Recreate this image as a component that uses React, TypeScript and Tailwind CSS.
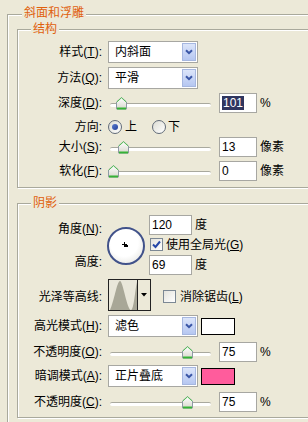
import React from "react";

function Mn({ text, k }: { text: string; k?: string }) {
  return (
    <>
      {text}
      {k && (
        <>
          (<span className="underline underline-offset-[1px]">{k}</span>)
        </>
      )}
      :
    </>
  );
}

function Label({ children }: { children: React.ReactNode }) {
  return <div className="w-[84px] shrink-0 text-right leading-[14px]">{children}</div>;
}

function Select({ value }: { value: string }) {
  return (
    <div className="ml-[6px] flex h-[22px] w-[90px] shrink-0 border border-[#A7A7A2] bg-white">
      <span className="flex-1 pl-[6px] leading-[20px]">{value}</span>
      <span className="m-[1px] flex w-[14px] items-center justify-center border border-[#A6B7E0] bg-gradient-to-b from-[#DCE5FA] to-[#B6C7F1]">
        <svg width="8" height="6" viewBox="0 0 8 6">
          <path d="M1 1.2 L4 4.2 L7 1.2" stroke="#3A56A6" strokeWidth="2" fill="none" />
        </svg>
      </span>
    </div>
  );
}

function Field({ value, w = 38, sel }: { value: string; w?: number; sel?: boolean }) {
  return (
    <div
      className={`flex h-[20px] shrink-0 items-center border border-[#A7A7A2] bg-white pl-[2px] ${
        w === 38 ? "w-[38px]" : "w-[43px]"
      }`}
    >
      <span className={sel ? "bg-[#2F365F] px-[1px] leading-[14px] text-white" : "leading-[14px]"}>{value}</span>
    </div>
  );
}

function Thumb() {
  return (
    <svg width="11" height="13" viewBox="0 0 11 13">
      <defs>
        <linearGradient id="tg" x1="0" y1="0" x2="0" y2="1">
          <stop offset="0" stopColor="#ffffff" />
          <stop offset="1" stopColor="#D8D8CE" />
        </linearGradient>
      </defs>
      <path d="M5.5 0.5 L10.5 5 L10.5 12 L0.5 12 L0.5 5 Z" fill="url(#tg)" stroke="#8E9AA4" />
      <path d="M0.8 5 L5.5 0.8 L10.2 5" stroke="#56C256" fill="none" />
      <path d="M1 11.5 L10 11.5" stroke="#36B236" strokeWidth="2" />
    </svg>
  );
}

function Slider({ pos }: { pos: number }) {
  return (
    <div className="relative ml-[6px] h-full w-[103px] shrink-0">
      <div className="absolute left-[2px] top-[10px] h-[4px] w-[101px] rounded-[2px] border-t border-[#A9A99E] bg-white" />
      <div className="absolute top-[4px]" style={{ left: pos }}>
        <Thumb />
      </div>
    </div>
  );
}

function Check({ on }: { on?: boolean }) {
  return (
    <span className="flex h-[13px] w-[13px] shrink-0 items-center justify-center border border-[#7C8894] bg-gradient-to-br from-[#E4E3DC] to-white">
      {on && (
        <svg width="9" height="9" viewBox="0 0 9 9">
          <path d="M1 4.5 L3.5 7 L8 1.5" stroke="#2547A8" strokeWidth="2" fill="none" />
        </svg>
      )}
    </span>
  );
}

function Radio({ on }: { on?: boolean }) {
  return (
    <span className="flex h-[14px] w-[14px] shrink-0 items-center justify-center rounded-full border border-[#616B78] bg-gradient-to-br from-[#DCDCD4] to-white">
      {on && <span className="h-[6px] w-[6px] rounded-full bg-gradient-to-br from-[#5A7BD0] to-[#23409A]" />}
    </span>
  );
}

function Group({ title, className, children }: { title: string; className: string; children?: React.ReactNode }) {
  return (
    <div
      className={`relative border border-[#A9A99C] shadow-[inset_1px_1px_0_#fff,1px_1px_0_#fff] ${className}`}
    >
      <span className="absolute left-[13px] -top-[8px] bg-[#ECE9D8] px-[2px] text-[12px] leading-[15px] text-[#E0600C]">
        {title}
      </span>
      {children}
    </div>
  );
}

export default function App() {
  return (
    <div className="h-[422px] w-[308px] overflow-hidden bg-[#ECE9D8] pt-[14px] font-['Liberation_Sans','Noto_Sans_CJK_SC',sans-serif] text-[12px] text-black">
      <div className="relative ml-[7px] h-[430px] w-[340px] border border-[#A9A99C] shadow-[inset_1px_1px_0_#fff,1px_1px_0_#fff]">
        <span className="absolute left-[14px] -top-[9px] bg-[#ECE9D8] px-[2px] leading-[15px] text-[#E0600C]">
          斜面和浮雕
        </span>

        {/* 结构 */}
        <Group title="结构" className="ml-[9px] mt-[14px] h-[159px] w-[320px]">
          <div className="mt-[11px] flex h-[22px] items-center">
            <Label><Mn text="样式" k="T" /></Label>
            <Select value="内斜面" />
          </div>
          <div className="mt-[4px] flex h-[22px] items-center">
            <Label><Mn text="方法" k="Q" /></Label>
            <Select value="平滑" />
          </div>
          <div className="mt-[4px] flex h-[20px] items-center">
            <Label><Mn text="深度" k="D" /></Label>
            <Slider pos={8} />
            <div className="ml-[8px]"><Field value="101" sel /></div>
            <span className="ml-[3px]">%</span>
          </div>
          <div className="mt-[6px] flex h-[15px] items-center">
            <Label><Mn text="方向" /></Label>
            <div className="ml-[6px] flex items-center">
              <Radio on />
              <span className="ml-[3px]">上</span>
              <span className="ml-[15px]"><Radio /></span>
              <span className="ml-[2px]">下</span>
            </div>
          </div>
          <div className="mt-[3px] flex h-[20px] items-center">
            <Label><Mn text="大小" k="S" /></Label>
            <Slider pos={10} />
            <div className="ml-[8px]"><Field value="13" /></div>
            <span className="ml-[3px]">像素</span>
          </div>
          <div className="mt-[4px] flex h-[20px] items-center">
            <Label><Mn text="软化" k="F" /></Label>
            <Slider pos={0} />
            <div className="ml-[8px]"><Field value="0" /></div>
            <span className="ml-[3px]">像素</span>
          </div>
        </Group>

        {/* 阴影 */}
        <Group title="阴影" className="ml-[9px] mt-[15px] h-[215px] w-[320px]">
          <div className="mt-[11px] flex">
            <div className="w-[84px] shrink-0 text-right leading-[14px]">
              <div className="mt-[7px]"><Mn text="角度" k="N" /></div>
              <div className="mt-[19px]"><Mn text="高度" /></div>
            </div>
            <div className="ml-[5px] mt-[12px] flex h-[38px] w-[38px] shrink-0 items-center justify-center rounded-full border-2 border-[#41528A] bg-[radial-gradient(circle_at_45%_40%,#ffffff_50%,#DCDCD6_100%)]">
              <svg width="9" height="8" viewBox="0 0 9 8">
                <path d="M2.5 0 V5 M0 2.5 H5" stroke="#000" strokeWidth="1" />
                <rect x="3" y="3" width="3" height="2" fill="#000" />
              </svg>
            </div>
            <div className="ml-[4px] flex flex-col">
              <div className="flex items-center">
                <Field value="120" w={43} />
                <span className="ml-[3px]">度</span>
              </div>
              <div className="ml-[1px] mt-[3px] flex h-[13px] items-center">
                <Check on />
                <span className="ml-[3px]">
                  使用全局光(<span className="underline underline-offset-[1px]">G</span>)
                </span>
              </div>
              <div className="mt-[4px] flex items-center">
                <Field value="69" w={43} />
                <span className="ml-[3px]">度</span>
              </div>
            </div>
          </div>

          <div className="mt-[4px] flex h-[32px] items-center">
            <div className="w-[84px] shrink-0 pt-[4px] text-right leading-[14px]"><Mn text="光泽等高线" /></div>
            <div className="ml-[6px] flex h-[32px] w-[43px] shrink-0 border border-[#222]">
              <div className="h-full w-[29px] border-r border-[#222] bg-[#E9E7DA]">
                <svg width="29" height="30" viewBox="0 0 29 30" className="block">
                  <path
                    d="M1 30 C5 22 8 1 11 1 C14 1 18 30 22 30 C25 30 26 10 28 2 L28 30 Z"
                    fill="#A8A797"
                  />
                </svg>
              </div>
              <div className="flex flex-1 items-center justify-center">
                <svg width="6" height="4" viewBox="0 0 6 4">
                  <path d="M0 0 H6 L3 3.5 Z" fill="#000" />
                </svg>
              </div>
            </div>
            <div className="ml-[12px] flex items-center pt-[3px]">
              <Check />
              <span className="ml-[4px]">
                消除锯齿(<span className="underline underline-offset-[1px]">L</span>)
              </span>
            </div>
          </div>

          <div className="mt-[4px] flex h-[22px] items-center">
            <Label><Mn text="高光模式" k="H" /></Label>
            <Select value="滤色" />
            <span className="ml-[3px] h-[17px] w-[34px] border border-black bg-white" />
          </div>
          <div className="mt-[5px] flex h-[20px] items-center">
            <Label><Mn text="不透明度" k="O" /></Label>
            <Slider pos={74} />
            <div className="ml-[8px]"><Field value="75" /></div>
            <span className="ml-[3px]">%</span>
          </div>
          <div className="mt-[3px] flex h-[22px] items-center">
            <Label><Mn text="暗调模式" k="A" /></Label>
            <Select value="正片叠底" />
            <span className="ml-[3px] h-[17px] w-[34px] border border-black bg-[#FF5C9C]" />
          </div>
          <div className="mt-[5px] flex h-[20px] items-center">
            <Label><Mn text="不透明度" k="C" /></Label>
            <Slider pos={74} />
            <div className="ml-[8px]"><Field value="75" /></div>
            <span className="ml-[3px]">%</span>
          </div>
        </Group>
      </div>
    </div>
  );
}
